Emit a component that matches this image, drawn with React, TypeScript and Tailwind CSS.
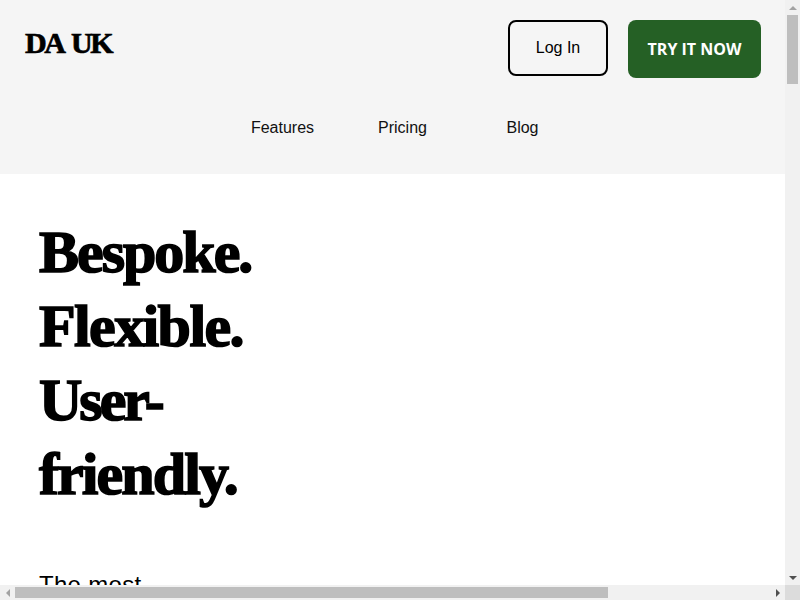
function Arrow({ dir, dark }: { dir: "up" | "down" | "left" | "right"; dark?: boolean }) {
  const points = {
    up: "4,0 8,4 0,4",
    down: "0,0 8,0 4,4",
    left: "4,0 4,8 0,4",
    right: "0,0 4,4 0,8",
  }[dir];
  const vertical = dir === "up" || dir === "down";

  return (
    <svg
      width={vertical ? 8 : 4}
      height={vertical ? 4 : 8}
      viewBox={vertical ? "0 0 8 4" : "0 0 4 8"}
      fill={dark ? "#505050" : "#a3a3a3"}
    >
      <polygon points={points} />
    </svg>
  );
}

export default function App() {
  return (
    <div className="flex h-screen w-screen flex-col overflow-hidden bg-white font-['Liberation_Sans',sans-serif] text-black">
      <div className="flex min-h-0 flex-1">
        <div className="min-w-0 flex-1 overflow-hidden">
          <header className="flex h-[174px] flex-col bg-[#f5f5f5]">
            <div className="flex items-start justify-between pl-[25px] pr-6 pt-5">
              <p className="font-['Liberation_Serif',serif] text-[30px] leading-[46px] font-black tracking-[-2.4px] [word-spacing:4px] [-webkit-text-stroke:0.7px_black]">
                DA UK
              </p>
              <div className="flex items-start gap-5">
                <button className="h-14 w-[100px] rounded-lg border-2 border-black text-base">
                  Log In
                </button>
                <button className="h-[58px] w-[133px] rounded-lg bg-[#256025] font-['Open_Sans',sans-serif] text-base font-bold text-white">
                  TRY IT NOW
                </button>
              </div>
            </div>
            <nav className="mt-[38px] flex justify-center pl-5 text-base leading-[24px] text-[#111]">
              <a className="w-[120px] text-center">Features</a>
              <a className="w-[120px] text-center">Pricing</a>
              <a className="w-[120px] text-center">Blog</a>
            </nav>
          </header>
          <main className="pl-[39px] pt-[41px]">
            <h1 className="w-[240px] font-['Liberation_Serif',serif] text-[60px] leading-[74px] font-black tracking-[-2px] [-webkit-text-stroke:1.6px_black]">
              Bespoke. <span className="tracking-[-1.6px]">Flexible.</span>{" "}
              <span className="tracking-[-3px]">User-</span>
              <span className="tracking-[-1.9px]">friendly.</span>
            </h1>
            <p className="mt-[58px] w-[200px] font-['Liberation_Sans',sans-serif] text-2xl leading-8 font-light tracking-[0.3px]">
              The most
            </p>
          </main>
        </div>
        <div className="flex w-[15px] shrink-0 flex-col items-center bg-[#f1f1f1]">
          <div className="flex h-[15px] w-full items-center justify-center">
            <Arrow dir="up" />
          </div>
          <div className="flex min-h-0 flex-1 flex-col items-center">
            <div className="h-[69px] w-[11px] bg-[#bebebe]" />
          </div>
          <div className="flex h-[15px] w-full items-center justify-center">
            <Arrow dir="down" dark />
          </div>
        </div>
      </div>
      <div className="flex h-[15px] shrink-0 bg-[#f1f1f1]">
        <div className="flex w-[15px] items-center justify-center">
          <Arrow dir="left" />
        </div>
        <div className="flex min-w-0 flex-1 items-center">
          <div className="h-[11px] w-[593px] bg-[#bebebe]" />
        </div>
        <div className="flex w-[15px] items-center justify-center">
          <Arrow dir="right" dark />
        </div>
        <div className="w-[15px] bg-[#dcdcdc]" />
      </div>
    </div>
  );
}
